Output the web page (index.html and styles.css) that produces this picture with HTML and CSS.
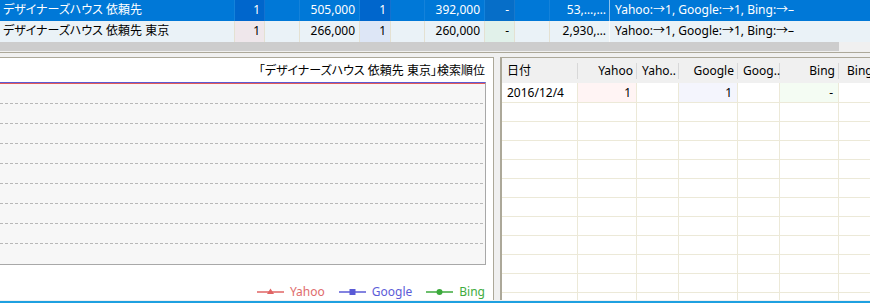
FILE: index.html
```html
<!DOCTYPE html>
<html lang="ja">
<head>
<meta charset="utf-8">
<link rel="stylesheet" href="styles.css">
</head>
<body>
<div class="app">
  <div class="top">
    <div class="trow sel">
      <div class="c c1">デザイナーズハウス 依頼先</div>
      <div class="c c2 r">1</div>
      <div class="c c3"></div>
      <div class="c c4 r">505,000</div>
      <div class="c c5 r">1</div>
      <div class="c c6"></div>
      <div class="c c7 r">392,000</div>
      <div class="c c8 r">-</div>
      <div class="c c9"></div>
      <div class="c c10 r">53,…,…</div>
      <div class="c c11">Yahoo:→1, Google:→1, Bing:→–</div>
    </div>
    <div class="trow alt">
      <div class="c c1">デザイナーズハウス 依頼先 東京</div>
      <div class="c c2 r">1</div>
      <div class="c c3"></div>
      <div class="c c4 r">266,000</div>
      <div class="c c5 r">1</div>
      <div class="c c6"></div>
      <div class="c c7 r">260,000</div>
      <div class="c c8 r">-</div>
      <div class="c c9"></div>
      <div class="c c10 r">2,930,…</div>
      <div class="c c11">Yahoo:→1, Google:→1, Bing:→–</div>
    </div>
    <div class="hscroll"><div class="thumb"></div></div>
  </div>
  <div class="split-h"></div>
  <div class="bottom">
    <div class="chart-panel">
      <div class="chart-title">「デザイナーズハウス 依頼先 東京」検索順位</div>
      <div class="plot">
        <svg class="grid-lines" width="485" height="180" viewBox="0 0 485 180">
          <g stroke="#b8b8b8" stroke-width="1" stroke-dasharray="3 2">
            <line x1="0" y1="19.5" x2="485" y2="19.5"/>
            <line x1="0" y1="39.5" x2="485" y2="39.5"/>
            <line x1="0" y1="59.5" x2="485" y2="59.5"/>
            <line x1="0" y1="79.5" x2="485" y2="79.5"/>
            <line x1="0" y1="99.5" x2="485" y2="99.5"/>
            <line x1="0" y1="119.5" x2="485" y2="119.5"/>
            <line x1="0" y1="139.5" x2="485" y2="139.5"/>
            <line x1="0" y1="159.5" x2="485" y2="159.5"/>
          </g>
        </svg>
      </div>
      <div class="legend">
        <div class="li yahoo">
          <svg width="27" height="10" viewBox="0 0 27 10"><line x1="0" y1="5" x2="27" y2="5" stroke="#e06464" stroke-width="1.5"/><polygon points="13.5,1.5 17,7 10,7" fill="#e06464"/></svg>
          <span>Yahoo</span>
        </div>
        <div class="li google">
          <svg width="27" height="10" viewBox="0 0 27 10"><line x1="0" y1="5" x2="27" y2="5" stroke="#5a5ad6" stroke-width="1.5"/><rect x="10.5" y="2" width="6" height="6" fill="#5a5ad6"/></svg>
          <span>Google</span>
        </div>
        <div class="li bing">
          <svg width="27" height="10" viewBox="0 0 27 10"><line x1="0" y1="5" x2="27" y2="5" stroke="#3caa3c" stroke-width="1.5"/><circle cx="13.5" cy="5" r="3" fill="#3caa3c"/></svg>
          <span>Bing</span>
        </div>
      </div>
    </div>
    <div class="split-v"></div>
    <div class="grid-panel">
      <div class="grow head">
        <div class="g g1">日付</div>
        <div class="g g2 r">Yahoo</div>
        <div class="g g3">Yaho‥</div>
        <div class="g g4 r">Google</div>
        <div class="g g5">Goog‥</div>
        <div class="g g6 r">Bing</div>
        <div class="g g7">Bing</div>
      </div>
      <div class="grow first">
        <div class="g g1">2016/12/4</div>
        <div class="g g2 r y">1</div>
        <div class="g g3"></div>
        <div class="g g4 r go">1</div>
        <div class="g g5"></div>
        <div class="g g6 r b">-</div>
        <div class="g g7"></div>
      </div>
      <div class="grow"><div class="g g1"></div><div class="g g2"></div><div class="g g3"></div><div class="g g4"></div><div class="g g5"></div><div class="g g6"></div><div class="g g7"></div></div>
      <div class="grow"><div class="g g1"></div><div class="g g2"></div><div class="g g3"></div><div class="g g4"></div><div class="g g5"></div><div class="g g6"></div><div class="g g7"></div></div>
      <div class="grow"><div class="g g1"></div><div class="g g2"></div><div class="g g3"></div><div class="g g4"></div><div class="g g5"></div><div class="g g6"></div><div class="g g7"></div></div>
      <div class="grow"><div class="g g1"></div><div class="g g2"></div><div class="g g3"></div><div class="g g4"></div><div class="g g5"></div><div class="g g6"></div><div class="g g7"></div></div>
      <div class="grow"><div class="g g1"></div><div class="g g2"></div><div class="g g3"></div><div class="g g4"></div><div class="g g5"></div><div class="g g6"></div><div class="g g7"></div></div>
      <div class="grow"><div class="g g1"></div><div class="g g2"></div><div class="g g3"></div><div class="g g4"></div><div class="g g5"></div><div class="g g6"></div><div class="g g7"></div></div>
      <div class="grow"><div class="g g1"></div><div class="g g2"></div><div class="g g3"></div><div class="g g4"></div><div class="g g5"></div><div class="g g6"></div><div class="g g7"></div></div>
      <div class="grow"><div class="g g1"></div><div class="g g2"></div><div class="g g3"></div><div class="g g4"></div><div class="g g5"></div><div class="g g6"></div><div class="g g7"></div></div>
      <div class="grow"><div class="g g1"></div><div class="g g2"></div><div class="g g3"></div><div class="g g4"></div><div class="g g5"></div><div class="g g6"></div><div class="g g7"></div></div>
      <div class="grow"><div class="g g1"></div><div class="g g2"></div><div class="g g3"></div><div class="g g4"></div><div class="g g5"></div><div class="g g6"></div><div class="g g7"></div></div>
      <div class="grow"><div class="g g1"></div><div class="g g2"></div><div class="g g3"></div><div class="g g4"></div><div class="g g5"></div><div class="g g6"></div><div class="g g7"></div></div>
    </div>
  </div>
  <div class="status"></div>
</div>
</body>
</html>
```

FILE: styles.css
```css
* { box-sizing: border-box; }
html, body { margin: 0; padding: 0; }
body {
  width: 870px;
  height: 303px;
  overflow: hidden;
  background: #f0f0f0;
  font-family: "Noto Sans", "Noto Sans CJK JP", sans-serif;
  font-size: 12px;
  font-feature-settings: "palt";
  color: #000;
}
.app { display: flex; flex-direction: column; width: 870px; height: 303px; }

/* top list */
.top { height: 53px; border-bottom: 1px solid #aca899; padding-bottom: 1px; }
.trow { display: flex; height: 21px; line-height: 20px; white-space: nowrap; }
.c { height: 100%; overflow: hidden; padding: 0 4px; flex: none; border-right: 1px solid #e4e1d2; }
.r { text-align: right; }
.c1 { width: 235px; padding-left: 3px; }
.c2 { width: 30px; }
.c3 { width: 35px; }
.c4 { width: 60px; }
.c5 { width: 31px; }
.c6 { width: 34px; }
.c7 { width: 60px; }
.c8 { width: 30px; padding-right: 5px; }
.c9 { width: 35px; }
.c10 { width: 60px; padding-right: 3px; }
.c11 { flex: 1; border-right: none; padding-left: 5px; }

.sel { background: #0078d7; color: #fff; }
.sel .c { border-right-color: rgba(255,255,255,0.08); }
.sel .c2, .sel .c5 { background: #0066cc; }
.sel .c8 { background: #066ec8; }
.sel .c10 { border-right-color: rgba(255,255,255,0.55); }

.alt { background: #eaf2f7; }
.alt .c2 { background: #efe7eb; }
.alt .c5 { background: #dde6f6; }
.alt .c8 { background: #e1f1ea; }
.alt .c10 { border-right-color: #fafafa; }

.hscroll { height: 9px; background: #f0f0f0; display: flex; }
.thumb { width: 839px; background: #cdcdcd; }

.split-h { height: 5px; background: #f0f0f0; }

/* bottom */
.bottom { display: flex; height: 243px; }
.chart-panel {
  width: 494px;
  background: #fff;
  border-top: 1px solid #aca899;
  border-right: 1px solid #aca899;
  display: flex;
  flex-direction: column;
}
.chart-title {
  height: 24px;
  line-height: 26px;
  text-align: right;
  padding-right: 8px;
  white-space: nowrap;
}
.plot {
  width: 486px;
  height: 183px;
  background: linear-gradient(#e05a5a, #e05a5a) top left / 100% 1px no-repeat, #f7f7f7;
  border-top: 1px solid #5c5cd4;
  padding-top: 1px;
  border-right: 1px solid #a8a8a8;
  border-bottom: 1px solid #a8a8a8;
}
.grid-lines { display: block; }
.legend {
  display: flex;
  justify-content: flex-end;
  gap: 14px;
  padding: 19px 8px 0 0;
  line-height: 16px;
}
.li { display: flex; align-items: center; gap: 6px; }
.li svg { display: block; }
.yahoo span { color: #e06c6c; }
.google span { color: #5c5cd8; }
.bing span { color: #40ac40; }

.split-v { width: 6px; background: #f0f0f0; }

.grid-panel {
  flex: 1;
  background: #fff;
  border-top: 1px solid #aca899;
  border-left: 2px solid #aca899;
  overflow: hidden;
}
.grow { display: flex; height: 19px; border-bottom: 1px solid #ece9d8; line-height: 18px; white-space: nowrap; }
.grow.first { height: 20px; line-height: 20px; }
.g { flex: none; height: 100%; border-right: 1px solid #ece9d8; padding: 0 5px; overflow: hidden; }
.g1 { width: 76px; }
.g2 { width: 59px; }
.g3 { width: 42px; }
.g4 { width: 59px; }
.g5 { width: 42px; }
.g6 { width: 59px; }
.g7 { width: 70px; border-right: none; padding-left: 8px; }

.grow.head {
  height: 25px;
  line-height: 26px;
  background: #f0f0f0;
  border-bottom: none;
}
.head .g {
  border-right: none;
  background: linear-gradient(#d8d8d8, #d8d8d8) right 5px / 1px 16px no-repeat;
}
.head .g2, .head .g4, .head .g6 { padding-right: 4px; }
.head .g7 { background: none; }

.y { background: #fff4f4; }
.go { background: #f4f5fd; }
.b { background: #f4fcf3; }

.status { height: 3px; margin-top: 1px; background: #1ea0e0; }
```
